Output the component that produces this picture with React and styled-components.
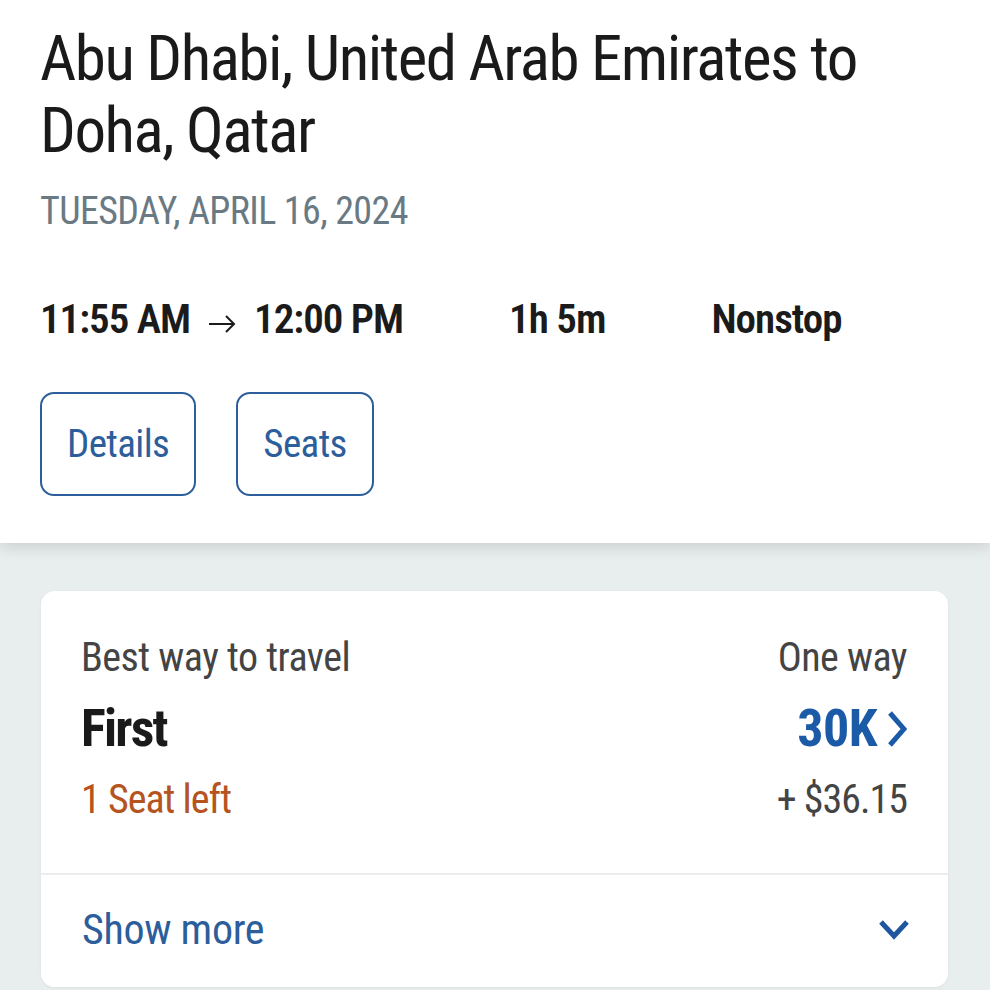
import React from "react";
import styled, { createGlobalStyle } from "styled-components";

const Global = createGlobalStyle`
  html, body {
    margin: 0;
    padding: 0;
    background: #e8eded;
    font-family: "Roboto Condensed", "Roboto", "Liberation Sans", sans-serif;
    -webkit-font-smoothing: antialiased;
  }
  * { box-sizing: border-box; }
`;

const Page = styled.div`
  width: 990px;
  min-height: 990px;
  overflow: hidden;
`;

const Header = styled.header`
  background: #ffffff;
  padding: 23px 40px 47px 40px;
  box-shadow: 0 4px 14px rgba(0, 0, 0, 0.13);
  position: relative;
  z-index: 1;
`;

const Title = styled.h1`
  margin: 0;
  font-size: 63px;
  line-height: 72px;
  font-weight: 400;
  letter-spacing: -1.5px;
  color: #1a1a1a;
`;

const DateLine = styled.div`
  margin-top: 21px;
  font-size: 38px;
  line-height: 46px;
  color: #6a7a84;
  letter-spacing: -0.6px;
`;

const TimesRow = styled.div`
  margin-top: 60px;
  display: flex;
  align-items: center;
  gap: 106px;
  font-size: 41px;
  line-height: 50px;
  font-weight: 600;
  color: #1b1b1b;
  letter-spacing: -1px;
`;

const TimeGroup = styled.div`
  display: flex;
  align-items: center;
  gap: 18px;
`;

const ArrowIcon = styled.svg`
  width: 28px;
  height: 20px;
  margin-top: 10px;
  flex: none;
`;

const Buttons = styled.div`
  margin-top: 48px;
  display: flex;
  gap: 40px;
`;

const OutlineButton = styled.button`
  height: 104px;
  padding: 0 25px;
  border: 2.5px solid #2c5e9b;
  border-radius: 14px;
  background: #fff;
  color: #2c5e9b;
  font-family: inherit;
  font-size: 39px;
  font-weight: 400;
  letter-spacing: -0.6px;
  cursor: pointer;
`;

const Main = styled.main`
  padding: 48px 42px 0 41px;
`;

const Card = styled.section`
  background: #fff;
  border-radius: 14px;
  box-shadow: 0 1px 3px rgba(0, 0, 0, 0.06);
  overflow: hidden;
`;

const CardTop = styled.div`
  padding: 43px 41px 48px 40px;
  display: flex;
  flex-direction: column;
`;

const Row = styled.div`
  display: flex;
  justify-content: space-between;
  align-items: baseline;
  margin-top: ${(p) => p.$gap || 0}px;
`;

const Label = styled.span`
  font-size: 40px;
  line-height: 48px;
  color: #444;
  letter-spacing: -0.5px;
`;

const Cabin = styled.span`
  font-size: 52px;
  line-height: 60px;
  font-weight: 700;
  color: #1a1a1a;
  letter-spacing: -1.8px;
`;

const Miles = styled.a`
  display: flex;
  align-items: center;
  gap: 10px;
  font-size: 52px;
  line-height: 60px;
  font-weight: 700;
  color: #1b5aa7;
  text-decoration: none;
  letter-spacing: -0.5px;
`;

const Info = styled.span`
  font-size: 40px;
  line-height: 50px;
  color: ${(p) => p.$color || "#444"};
  letter-spacing: -1px;
`;

const Divider = styled.hr`
  margin: 0;
  border: 0;
  height: 2px;
  background: #eceeee;
`;

const ShowMore = styled.button`
  width: 100%;
  display: flex;
  justify-content: space-between;
  align-items: center;
  padding: 30px 39px 32px 41px;
  border: 0;
  background: #fff;
  font-family: inherit;
  font-size: 42px;
  line-height: 50px;
  color: #2c5e9b;
  letter-spacing: -0.3px;
  cursor: pointer;
`;

const ChevronSvg = styled.svg`
  flex: none;
  display: block;
`;

export default function App() {
  return (
    <Page>
      <Global />
      <Header>
        <Title>
          Abu Dhabi, United Arab Emirates to
          <br />
          Doha, Qatar
        </Title>
        <DateLine>TUESDAY, APRIL 16, 2024</DateLine>
        <TimesRow>
          <TimeGroup>
            <span>11:55 AM</span>
            <ArrowIcon viewBox="0 0 28 20" fill="none" stroke="#1b1b1b" strokeWidth="2">
              <path d="M1 10H26M18 2L26 10L18 18" />
            </ArrowIcon>
            <span>12:00 PM</span>
          </TimeGroup>
          <span>1h 5m</span>
          <span>Nonstop</span>
        </TimesRow>
        <Buttons>
          <OutlineButton>Details</OutlineButton>
          <OutlineButton>Seats</OutlineButton>
        </Buttons>
      </Header>
      <Main>
        <Card>
          <CardTop>
            <Row>
              <Label>Best way to travel</Label>
              <Label>One way</Label>
            </Row>
            <Row $gap={17}>
              <Cabin>First</Cabin>
              <Miles href="#">
                30K
                <ChevronSvg width="20" height="38" viewBox="0 0 20 38" fill="none" stroke="#1b5aa7" strokeWidth="5">
                  <path d="M3 3L17 19L3 35" />
                </ChevronSvg>
              </Miles>
            </Row>
            <Row $gap={16}>
              <Info $color="#b5541e">1 Seat left</Info>
              <Info>+ $36.15</Info>
            </Row>
          </CardTop>
          <Divider />
          <ShowMore>
            <span>Show more</span>
            <ChevronSvg width="30" height="22" viewBox="0 0 30 22" fill="none" stroke="#1f56a0" strokeWidth="5">
              <path d="M2 3L15 17L28 3" />
            </ChevronSvg>
          </ShowMore>
        </Card>
      </Main>
    </Page>
  );
}
